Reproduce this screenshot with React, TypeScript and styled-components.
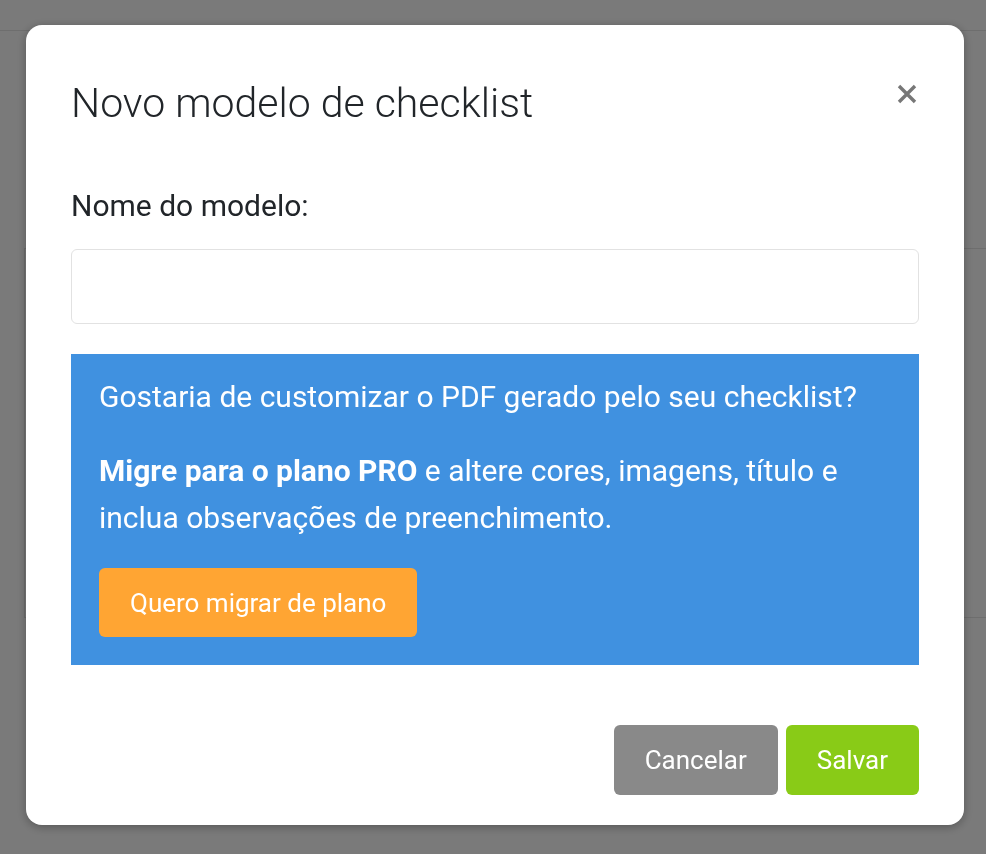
import React from "react";
import styled, { createGlobalStyle } from "styled-components";

const GlobalStyle = createGlobalStyle`
  html, body {
    margin: 0;
    padding: 0;
    height: 100%;
    background: #f5f5f5;
    font-family: Roboto, "Liberation Sans", sans-serif;
  }
  * { box-sizing: border-box; }
`;

const Page = styled.div`
  height: 854px;
  overflow: hidden;
`;

const TopBar = styled.div`
  height: 31px;
  border-bottom: 1px solid #dcdcdc;
`;

const BackCard = styled.div`
  margin: 217px 0 0 24px;
  height: 370px;
  border: 1px solid #dcdcdc;
  border-right: none;
`;

const Overlay = styled.div`
  position: fixed;
  inset: 0;
  background: rgba(0, 0, 0, 0.5);
  display: flex;
  justify-content: center;
  align-items: flex-start;
  padding: 25px 0 0 4px;
`;

const Modal = styled.div`
  width: 938px;
  height: 800px;
  background: #fff;
  border-radius: 16px;
  box-shadow: 0 2px 10px rgba(0, 0, 0, 0.3);
  padding: 0 45px 30px;
  display: flex;
  flex-direction: column;
`;

const Header = styled.div`
  display: flex;
  justify-content: space-between;
  align-items: flex-start;
  padding-top: 54px;
`;

const Title = styled.h2`
  margin: 0;
  font-weight: 300;
  font-size: 41px;
  line-height: 48px;
  color: #212529;
`;

const Close = styled.button`
  border: none;
  background: none;
  padding: 0;
  margin: 1px -2px 0 0;
  width: 28px;
  height: 28px;
  display: flex;
  align-items: center;
  justify-content: center;
  cursor: pointer;
`;

const Label = styled.label`
  display: block;
  margin-top: 61px;
  font-size: 30px;
  line-height: 36px;
  color: #212529;
`;

const Input = styled.input`
  display: block;
  width: 100%;
  height: 75px;
  margin-top: 25px;
  border: 1px solid #e2e2e2;
  border-radius: 6px;
  font-size: 28px;
  padding: 0 20px;
  outline: none;
`;

const Promo = styled.div`
  margin-top: 30px;
  background: #4091e0;
  color: #fff;
  padding: 19px 28px 28px;
  font-size: 30px;
`;

const PromoText = styled.p`
  margin: 0 0 27px;
  line-height: 47px;

  strong {
    font-weight: 700;
  }
`;

const Footer = styled.div`
  margin-top: auto;
  display: flex;
  justify-content: flex-end;
  gap: 8px;
`;

const Button = styled.button<{ $bg: string; $h: number }>`
  border: none;
  background: ${(p) => p.$bg};
  color: #fff;
  font-family: Roboto, "Liberation Sans", sans-serif;
  font-size: 26px;
  height: ${(p) => p.$h}px;
  padding: 0 31px;
  border-radius: 6px;
  cursor: pointer;
`;

export default function App() {
  return (
    <>
      <GlobalStyle />
      <Page>
        <TopBar />
        <BackCard />
      </Page>
      <Overlay>
        <Modal>
          <Header>
            <Title>Novo modelo de checklist</Title>
            <Close aria-label="Fechar">
              <svg width="20" height="20" viewBox="0 0 20 20">
                <path
                  d="M2 2 L18 18 M18 2 L2 18"
                  stroke="#777"
                  strokeWidth="3.4"
                  strokeLinecap="butt"
                />
              </svg>
            </Close>
          </Header>
          <Label htmlFor="nome">Nome do modelo:</Label>
          <Input id="nome" />
          <Promo>
            <PromoText>
              Gostaria de customizar o PDF gerado pelo seu checklist?
            </PromoText>
            <PromoText>
              <strong>Migre para o plano PRO</strong> e altere cores, imagens,
              título e inclua observações de preenchimento.
            </PromoText>
            <Button $bg="#ffa533" $h={69}>
              Quero migrar de plano
            </Button>
          </Promo>
          <Footer>
            <Button $bg="#898989" $h={70}>
              Cancelar
            </Button>
            <Button $bg="#89cb17" $h={70}>
              Salvar
            </Button>
          </Footer>
        </Modal>
      </Overlay>
    </>
  );
}
